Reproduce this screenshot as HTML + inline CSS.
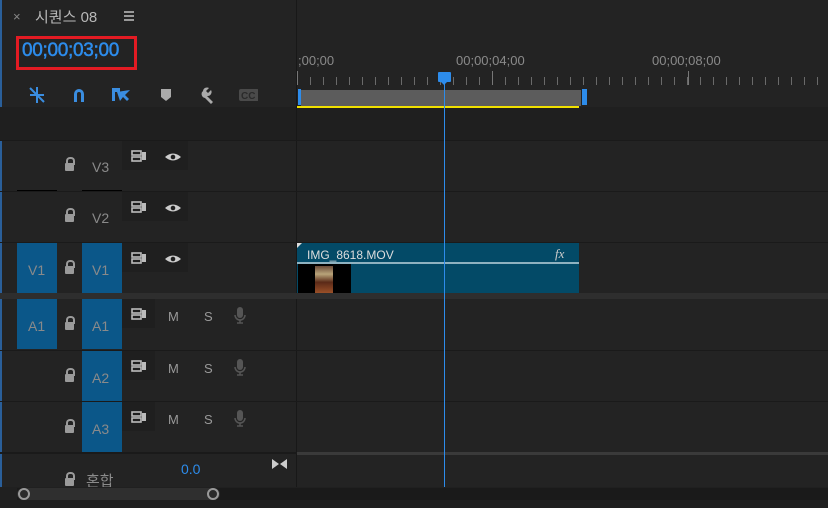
<!DOCTYPE html>
<html><head><meta charset="utf-8"><style>
*{margin:0;padding:0;box-sizing:border-box}
body{width:828px;height:508px;background:#232323;position:relative;overflow:hidden;font-family:"Liberation Sans","Noto Sans CJK KR",sans-serif;color:#8a8a8a}
.a{position:absolute}
.t{font-size:14px;color:#8a8a8a}
.blue{background:#0b5789}
.lk{width:9px;height:8px;background:#9a9a9a;border-radius:1px}
.lk:before{content:"";position:absolute;left:1px;top:-6px;width:5px;height:6px;border:2px solid #9a9a9a;border-bottom:none;border-radius:4px 4px 0 0}
.grp{background:#1f1f1f}
.ti{font-size:13px;color:#999}
</style></head><body>
<div class="a" style="left:0;top:0;width:2px;height:508px;background:#2a5f9a"></div>
<div class="a" style="left:13px;top:9px;font-size:13px;color:#888">×</div>
<div class="a" style="left:35px;top:6px;font-size:15px;color:#b8b8b8">시퀀스 08</div>
<div class="a" style="left:124px;top:11px;width:10px;height:2px;background:#999;box-shadow:0 4px #999,0 8px #999"></div>
<div class="a" style="left:16px;top:36px;width:121px;height:34px;border:3px solid #e31b23"></div>
<div class="a" style="left:22px;top:40px;font-size:19px;color:#2d8ceb;-webkit-text-stroke:0.5px #2d8ceb;letter-spacing:-0.3px">00;00;03;00</div>
<!-- toolbar icons -->
<svg class="a" style="left:28px;top:86px" width="230" height="20">
<g stroke="#3a8de0" stroke-width="2"><line x1="2" y1="2" x2="16" y2="16"/><line x1="9" y1="1" x2="9" y2="17"/><line x1="2" y1="9" x2="16" y2="9"/></g>
<path d="M46 16V8a5 5 0 0 1 10 0v8h-3V8a2 2 0 0 0-4 0v8z" fill="#3a8de0"/>
<path d="M84 2h8v4h-5v9h-3z M89 6l13-2-5 5 4 4-2 2-4-4-3 4z" fill="#3a8de0"/>
<path d="M133 3h10v8l-5 4-5-4z" fill="#aaa"/>
<path d="M175 5a4 4 0 0 1 6-3l-3 3 2 2 3-3a4 4 0 0 1-4 6l6 6-2 2-6-6a4 4 0 0 1-2-7z" fill="#aaa"/>
<rect x="211" y="3" width="20" height="12" rx="2" fill="#4a4a4a"/>
<text x="213" y="13" font-size="10" font-weight="bold" fill="#2a2a2a" font-family="Liberation Sans">CC</text>
</svg>
<div class="a" style="left:0;top:107px;width:296px;height:34px;background:#1f1f1f"></div>
<div class="a" style="left:296px;top:0;width:1px;height:487px;background:#181818"></div>
<!-- ruler -->
<div class="a" style="left:298px;top:53px;font-size:13px;color:#8a8a8a">;00;00</div>
<div class="a" style="left:456px;top:53px;font-size:13px;color:#8a8a8a">00;00;04;00</div>
<div class="a" style="left:652px;top:53px;font-size:13px;color:#8a8a8a">00;00;08;00</div>
<div class="a" style="left:297px;top:71px;width:531px;height:14px;background:repeating-linear-gradient(90deg,#6a6a6a 0 1px,transparent 1px 13px);background-position:0 0;clip-path:inset(6px 0 0 0)"></div>
<div class="a" style="left:297px;top:71px;width:1px;height:14px;background:#777"></div>
<div class="a" style="left:492px;top:71px;width:1px;height:14px;background:#777"></div>
<div class="a" style="left:688px;top:71px;width:1px;height:14px;background:#777"></div>
<div class="a" style="left:297px;top:107px;width:531px;height:34px;background:#1f1f1f"></div>
<div class="a" style="left:298px;top:89px;width:3px;height:16px;background:#2d8ceb"></div>
<div class="a" style="left:301px;top:90px;width:280px;height:16px;background:#5c5c5c"></div>
<div class="a" style="left:582px;top:89px;width:5px;height:16px;background:#2d8ceb"></div>
<div class="a" style="left:297px;top:106px;width:282px;height:2px;background:#f0e000"></div>
<!-- track rows -->
<div class="a" style="left:0;top:140px;width:828px;height:1px;background:#1a1a1a"></div>
<div class="a" style="left:0;top:191px;width:828px;height:1px;background:#1a1a1a"></div>
<div class="a" style="left:0;top:242px;width:828px;height:1px;background:#1a1a1a"></div>
<div class="a" style="left:0;top:293px;width:828px;height:6px;background:#2e2e2e"></div>
<div class="a" style="left:0;top:350px;width:828px;height:1px;background:#1a1a1a"></div>
<div class="a" style="left:0;top:401px;width:828px;height:1px;background:#1a1a1a"></div>
<div class="a" style="left:0;top:452px;width:828px;height:2px;background:#1a1a1a"></div>
<div class="a" style="left:297px;top:452px;width:531px;height:3px;background:#3a3a3a"></div>
<div class="a" style="left:17px;top:190px;width:40px;height:1px;background:#000"></div>
<div class="a" style="left:82px;top:190px;width:40px;height:1px;background:#000"></div>
<!-- video rows -->
<div class="a blue" style="left:17px;top:243px;width:40px;height:50px"></div>
<div class="a blue" style="left:82px;top:243px;width:40px;height:50px"></div>
<div class="a blue" style="left:17px;top:299px;width:40px;height:50px"></div>
<div class="a blue" style="left:82px;top:299px;width:40px;height:50px"></div>
<div class="a blue" style="left:82px;top:351px;width:40px;height:50px"></div>
<div class="a blue" style="left:82px;top:402px;width:40px;height:50px"></div>
<div class="a t" style="left:92px;top:159px">V3</div>
<div class="a t" style="left:92px;top:210px">V2</div>
<div class="a t" style="left:28px;top:262px">V1</div>
<div class="a t" style="left:92px;top:262px">V1</div>
<div class="a t" style="left:28px;top:318px">A1</div>
<div class="a t" style="left:92px;top:318px">A1</div>
<div class="a t" style="left:92px;top:370px">A2</div>
<div class="a t" style="left:92px;top:421px">A3</div>
<div class="a lk" style="left:65px;top:163px"></div>
<div class="a lk" style="left:65px;top:214px"></div>
<div class="a lk" style="left:65px;top:266px"></div>
<div class="a lk" style="left:65px;top:322px"></div>
<div class="a lk" style="left:65px;top:374px"></div>
<div class="a lk" style="left:65px;top:425px"></div>
<div class="a lk" style="left:65px;top:478px"></div>
<!-- toggle groups -->
<div class="a grp" style="left:122px;top:141px;width:66px;height:29px"></div>
<div class="a grp" style="left:122px;top:192px;width:66px;height:29px"></div>
<div class="a grp" style="left:122px;top:243px;width:66px;height:29px"></div>
<div class="a grp" style="left:122px;top:299px;width:33px;height:29px"></div>
<div class="a grp" style="left:122px;top:351px;width:33px;height:29px"></div>
<div class="a grp" style="left:122px;top:402px;width:33px;height:29px"></div>
<svg class="a" style="left:0;top:0" width="296" height="508">
<defs>
<g id="cam"><rect x="0" y="0" width="9" height="4" fill="none" stroke="#bbb" stroke-width="1.6"/><rect x="0" y="6" width="9" height="4" fill="none" stroke="#bbb" stroke-width="1.6"/><rect x="10" y="1" width="4" height="8" fill="#bbb"/></g>
<g id="eye"><path d="M0 5Q8 -2 16 5Q8 12 0 5z" fill="#ccc"/><circle cx="8" cy="5" r="2.3" fill="#1f1f1f"/></g>
<g id="mic"><rect x="3" y="0" width="6" height="11" rx="3" fill="#555"/><path d="M1 8a5 5 0 0 0 10 0M6 13v3M3 16h6" stroke="#555" stroke-width="1.5" fill="none"/></g>
</defs>
<use href="#cam" x="132" y="151"/><use href="#eye" x="165" y="152"/>
<use href="#cam" x="132" y="202"/><use href="#eye" x="165" y="203"/>
<use href="#cam" x="132" y="253"/><use href="#eye" x="165" y="254"/>
<use href="#cam" x="132" y="309"/><use href="#cam" x="132" y="361"/><use href="#cam" x="132" y="412"/>
<use href="#mic" x="234" y="307"/><use href="#mic" x="234" y="359"/><use href="#mic" x="234" y="410"/>
<path d="M272 459l7 5-7 5zM287 459l-7 5 7 5z" fill="#ccc"/>
</svg>
<div class="a ti" style="left:168px;top:309px">M</div><div class="a ti" style="left:204px;top:309px">S</div>
<div class="a ti" style="left:168px;top:361px">M</div><div class="a ti" style="left:204px;top:361px">S</div>
<div class="a ti" style="left:168px;top:412px">M</div><div class="a ti" style="left:204px;top:412px">S</div>
<div class="a t" style="left:86px;top:470px;font-size:15px">혼합</div>
<div class="a" style="left:181px;top:461px;font-size:14px;color:#2d8ceb">0.0</div>
<!-- clip -->
<div class="a" style="left:297px;top:243px;width:282px;height:50px;background:#034a67"></div>
<div class="a" style="left:297px;top:243px;width:0;height:0;border-top:5px solid #ddd;border-right:5px solid transparent"></div>
<div class="a" style="left:307px;top:248px;font-size:12px;color:#ddd">IMG_8618.MOV</div>
<div class="a" style="left:555px;top:246px;font-size:13px;color:#ccc;font-style:italic;font-family:'Liberation Serif',serif">fx</div>
<div class="a" style="left:297px;top:262px;width:282px;height:2px;background:#8fb2c0"></div>
<div class="a" style="left:298px;top:264px;width:53px;height:29px;background:#000"></div>
<div class="a" style="left:315px;top:266px;width:18px;height:27px;background:linear-gradient(#6a4a38,#b8a47a 30%,#5a2a18 60%,#9a5028)"></div>
<!-- playhead -->
<div class="a" style="left:438px;top:72px;width:13px;height:10px;background:#2d8ceb;border-radius:1px"></div>
<div class="a" style="left:440px;top:81px;width:0;height:0;border-left:4px solid transparent;border-right:4px solid transparent;border-top:4px solid #2d8ceb"></div>
<div class="a" style="left:444px;top:80px;width:1px;height:407px;background:#2d8ceb"></div>
<!-- scrollbar -->
<div class="a" style="left:0;top:487px;width:828px;height:21px;background:#202020"></div>
<div class="a" style="left:17px;top:488px;width:811px;height:12px;background:#1a1a1a"></div>
<div class="a" style="left:17px;top:488px;width:203px;height:12px;background:#2f2f2f;border-radius:6px"></div>
<div class="a" style="left:18px;top:488px;width:12px;height:12px;border:2px solid #999;border-radius:50%;background:#2a2a2a"></div>
<div class="a" style="left:207px;top:488px;width:12px;height:12px;border:2px solid #999;border-radius:50%;background:#2a2a2a"></div>
</body></html>
